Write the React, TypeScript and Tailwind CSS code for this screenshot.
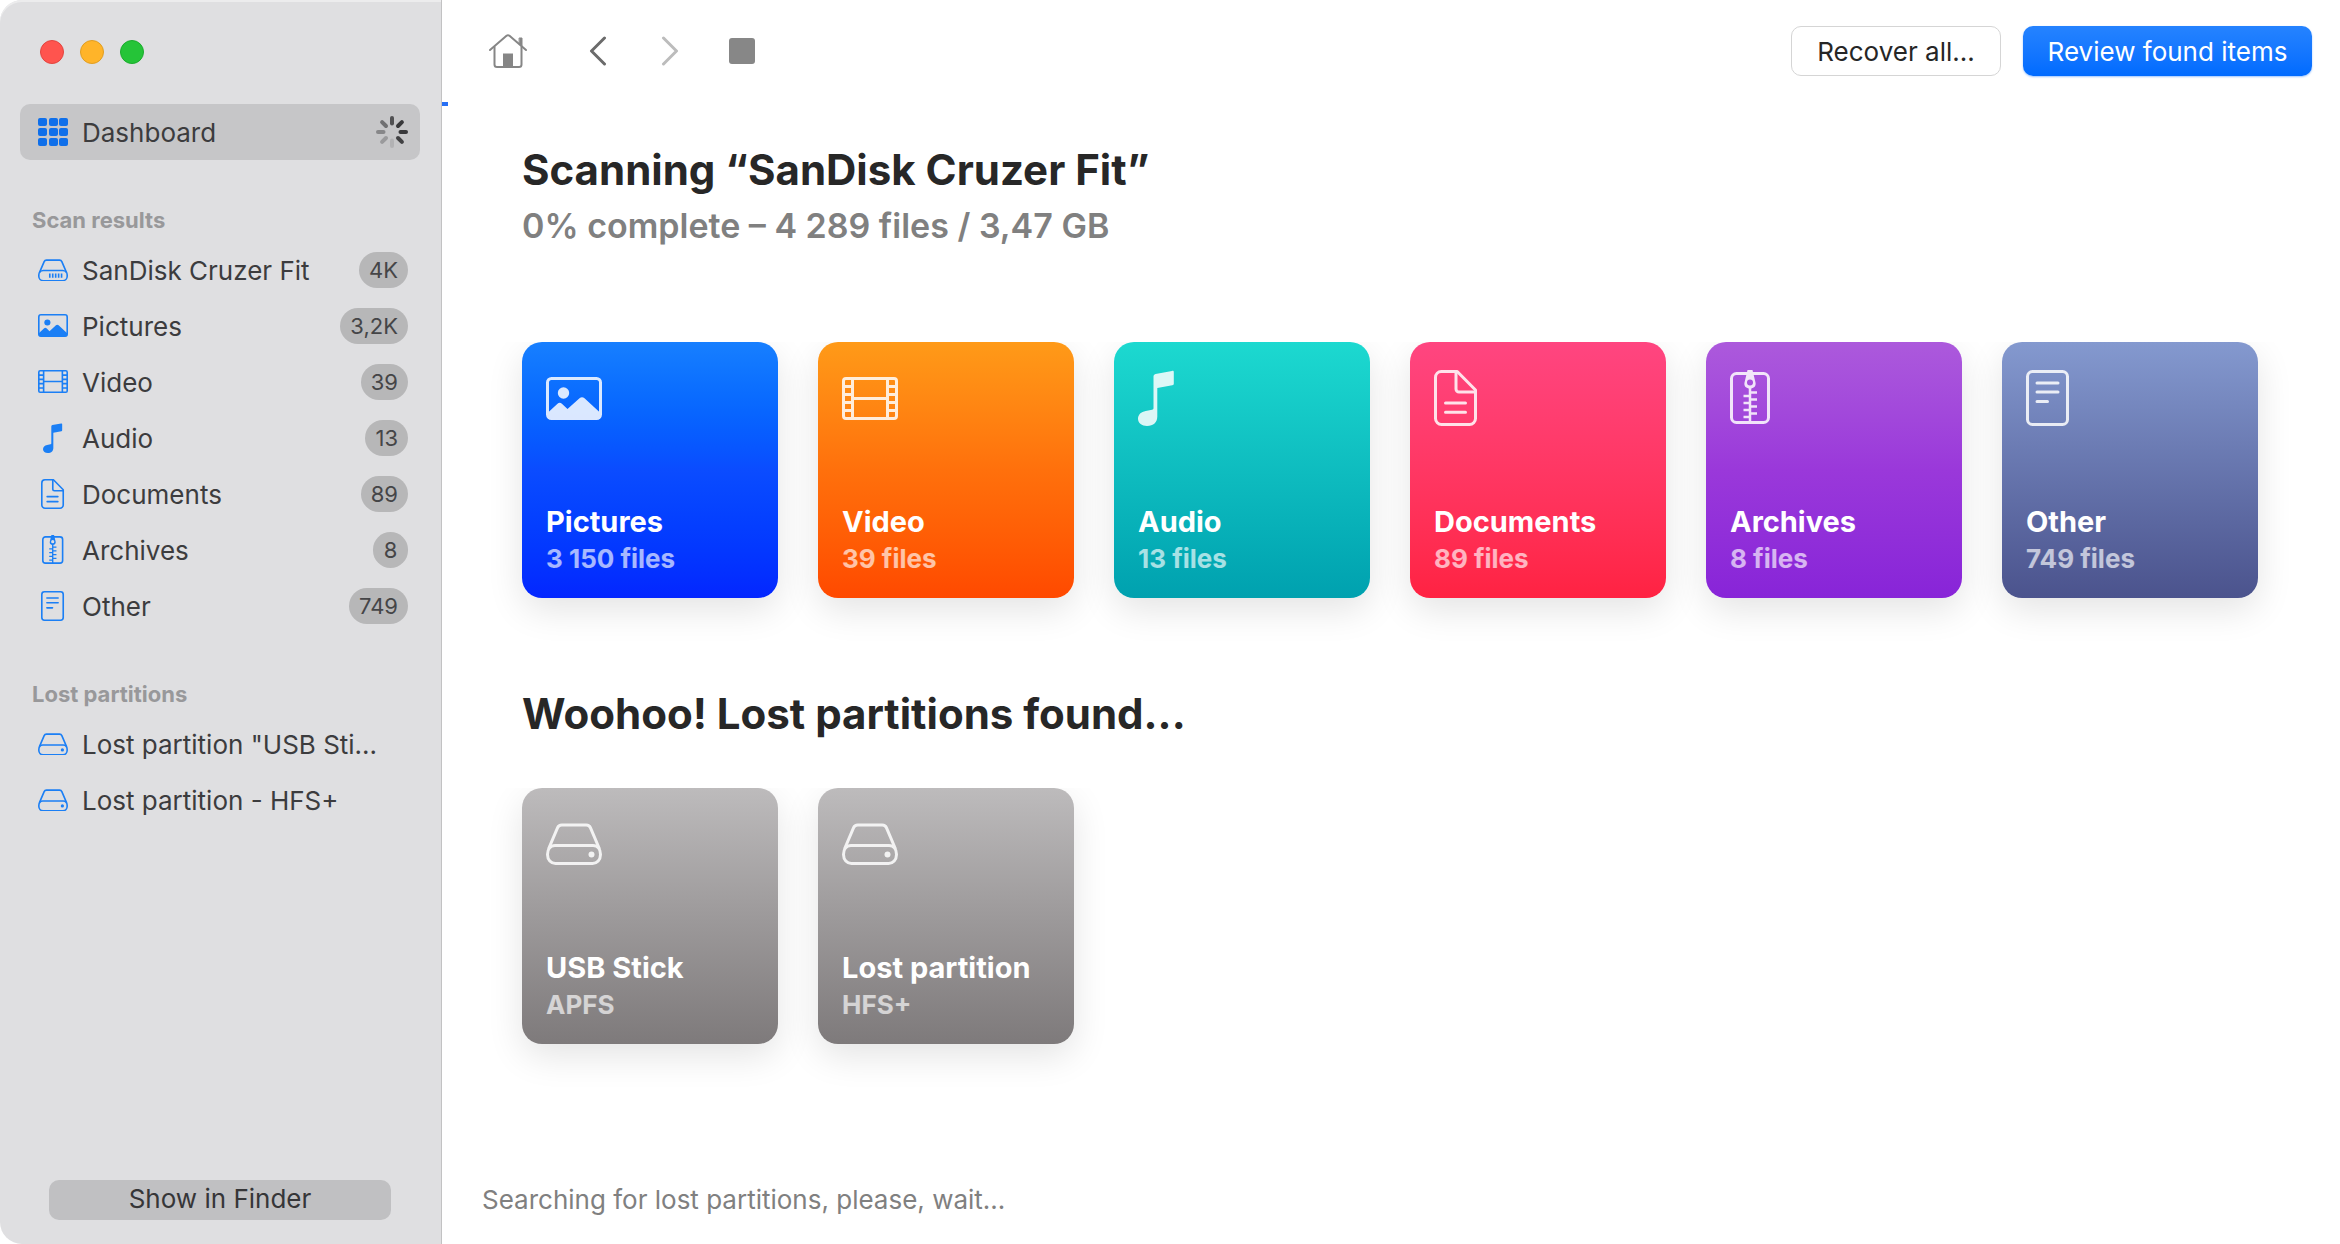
import { useState } from "react";
import type { ReactNode } from "react";

type IconName = "disk" | "drive" | "picture" | "video" | "audio" | "document" | "archive" | "other";

const SHAPES: Record<IconName, { w: number; h: number; art: ReactNode }> = {
  disk: {
    w: 56,
    h: 42,
    art: (
      <>
        <path d="M2.500 26 11.500 4.800C12.300 2.900 13.700 2 15.700 2h24.600c2 0 3.400.9 4.200 2.800L53.500 26" />
        <rect x="1.500" y="21.500" width="53" height="19" rx="8.500" />
        <path d="M22 27v8M27.500 27v8M33 27v8M38.500 27v8M44 27v8" />
      </>
    ),
  },
  drive: {
    w: 56,
    h: 42,
    art: (
      <>
        <path d="M2.500 26 11.500 4.800C12.300 2.900 13.700 2 15.700 2h24.600c2 0 3.400.9 4.200 2.800L53.500 26" />
        <path d="M9 22.500h38c4.500 0 7.500 3.700 7.500 9s-3.500 9-8 9h-37c-4.500 0-8-3.700-8-9s3-9 7.500-9Z" />
        <circle cx="45.500" cy="31.500" r="3" fill="currentColor" stroke="none" />
      </>
    ),
  },
  picture: {
    w: 56,
    h: 43,
    art: (
      <>
        <rect x="1.500" y="1.500" width="53" height="40" rx="4" />
        <circle cx="17.500" cy="16" r="5.700" fill="currentColor" stroke="none" />
        <path
          d="M1.500 36 11.500 26.800c1.400-1.300 3-1.300 4.400 0L21.500 32 33.500 21.200c1.600-1.400 3.400-1.400 5 0L54.500 36v3.700a2 2 0 0 1-2 2h-49a2 2 0 0 1-2-2Z"
          fill="currentColor"
          stroke="none"
        />
      </>
    ),
  },
  video: {
    w: 56,
    h: 43,
    art: (
      <>
        <rect x="1.500" y="1.500" width="53" height="40" rx="2.500" />
        <path d="M10.500 1.500v40M45.500 1.500v40M10.500 21.500h35" />
        <path d="M1.500 9.500h9M1.500 17.500h9M1.500 25.500h9M1.500 33.500h9M45.500 9.500h9M45.500 17.500h9M45.500 25.500h9M45.500 33.500h9" />
      </>
    ),
  },
  audio: {
    w: 36,
    h: 56,
    art: (
      <path
        d="M15.500 6.600c0-1.500.7-2.300 2-2.700L34 .9c1.200-.3 1.800.2 1.800 1.300v11.200c0 1-.5 1.600-1.500 1.800l-15 2.900V46.500c0 5.800-3.800 9.500-10.300 9.500C3.900 56 0 53.100 0 48.800c0-4.200 3.100-7 7.700-7.800l6.300-1.200c1-.2 1.500-.8 1.500-1.800Z"
        fill="currentColor"
        stroke="none"
      />
    ),
  },
  document: {
    w: 43,
    h: 56,
    art: (
      <>
        <path d="M7.300 1.500h15.900L41.500 20v28.500a6 6 0 0 1-6 6H7.500a6 6 0 0 1-6-6V7.500a6 6 0 0 1 5.800-6Z" />
        <path d="M22 1.500V19a3 3 0 0 0 3 3h16.500M11.500 33h20M11.500 42.300h20" strokeLinecap="round" />
      </>
    ),
  },
  archive: {
    w: 40,
    h: 56,
    art: (
      <>
        <rect x="1.500" y="3.500" width="37" height="49" rx="5" />
        <path
          d="M17.500 0h5l3 12.500c.8 3.700-1.700 6-5.500 6s-6.300-2.300-5.500-6Z M20 9.500a3 3 0 1 0 0 6 3 3 0 0 0 0-6Z"
          fill="currentColor"
          fillRule="evenodd"
          stroke="none"
        />
        <path
          d="M20 18v35M20 22.500h7M20 29.500h7M20 36.500h7M20 43.500h7M13.500 26h6.500M13.500 33h6.500M13.500 40h6.500M13.500 47h6.500"
          strokeWidth="2.500"
        />
      </>
    ),
  },
  other: {
    w: 43,
    h: 56,
    art: (
      <>
        <rect x="1.500" y="1.500" width="40" height="53" rx="5" />
        <path d="M11 13h21M11 22h21M11 31.500h10.500" strokeLinecap="round" />
      </>
    ),
  },
};

function Icon({ name, scale = 1 }: { name: IconName; scale?: number }) {
  const { w, h, art } = SHAPES[name];
  return (
    <svg
      width={w * scale}
      height={h * scale}
      viewBox={`0 0 ${w} ${h}`}
      fill="none"
      stroke="currentColor"
      strokeWidth={3}
      strokeLinejoin="round"
      aria-hidden="true"
    >
      {art}
    </svg>
  );
}

const SPOKES = [0.75, 0.9, 0.9, 0.85, 0.12, 0.28, 0.4, 0.55];

function Spinner() {
  return (
    <svg width="32" height="32" viewBox="-16 -16 32 32" aria-label="Scanning" role="img">
      {SPOKES.map((opacity, i) => (
        <path
          key={i}
          d="M0-8.500V-14"
          stroke="#2a2a2c"
          strokeWidth="4"
          strokeLinecap="round"
          opacity={opacity}
          transform={`rotate(${i * 45})`}
        />
      ))}
    </svg>
  );
}

function GridIcon() {
  return (
    <svg width="30" height="28" viewBox="0 0 30 28" fill="#0f6fea" aria-hidden="true">
      {[0, 10, 20].map((y) =>
        [0, 11, 21].map((x) => <rect key={`${x}-${y}`} x={x} y={y} width="9" height="8" rx="2" />),
      )}
    </svg>
  );
}

type Item = { icon: IconName; label: string; count?: string };

const RESULTS: Item[] = [
  { icon: "disk", label: "SanDisk Cruzer Fit", count: "4K" },
  { icon: "picture", label: "Pictures", count: "3,2K" },
  { icon: "video", label: "Video", count: "39" },
  { icon: "audio", label: "Audio", count: "13" },
  { icon: "document", label: "Documents", count: "89" },
  { icon: "archive", label: "Archives", count: "8" },
  { icon: "other", label: "Other", count: "749" },
];

const LOST: Item[] = [
  { icon: "drive", label: 'Lost partition "USB Sti...' },
  { icon: "drive", label: "Lost partition - HFS+" },
];

type Tile = { icon: IconName; title: string; detail: string; color: string };

const TILES: Tile[] = [
  { icon: "picture", title: "Pictures", detail: "3 150 files", color: "from-[#177fff] via-[#0b4cff] to-[#0426ff]" },
  { icon: "video", title: "Video", detail: "39 files", color: "from-[#ff9a18] via-[#ff700c] to-[#ff4900]" },
  { icon: "audio", title: "Audio", detail: "13 files", color: "from-[#1cd9d0] to-[#00a1af]" },
  { icon: "document", title: "Documents", detail: "89 files", color: "from-[#ff4580] to-[#ff2242]" },
  { icon: "archive", title: "Archives", detail: "8 files", color: "from-[#ac59dc] via-[#9a38da] to-[#8824d8]" },
  { icon: "other", title: "Other", detail: "749 files", color: "from-[#8499cf] to-[#4b538d]" },
];

const PARTITIONS: Tile[] = [
  { icon: "drive", title: "USB Stick", detail: "APFS", color: "from-[#bdbbbc] to-[#7e7a7b]" },
  { icon: "drive", title: "Lost partition", detail: "HFS+", color: "from-[#bdbbbc] to-[#7e7a7b]" },
];

function SideLabel({ children }: { children: ReactNode }) {
  return <span className="ml-[14px] grow pt-0.5 text-[26px] leading-9 whitespace-nowrap text-[#3c3c3e]">{children}</span>;
}

function SideItem({ icon, label, count }: Item) {
  return (
    <li>
      <button type="button" className="flex h-14 w-full items-center pr-3 pl-[18px] text-left">
        <span className="flex w-[30px] shrink-0 justify-center text-[#1b7ff5]">
          <Icon name={icon} scale={30 / 56} />
        </span>
        <SideLabel>{label}</SideLabel>
        {count && (
          <span className="flex h-9 min-w-[35px] items-center justify-center rounded-full bg-[#b7b7b8] px-[10px] text-[22px] text-[#454547]">
            {count}
          </span>
        )}
      </button>
    </li>
  );
}

function SideSection({ title, items }: { title: string; items: Item[] }) {
  return (
    <section className="mt-[38px]">
      <h2 className="pl-3 text-[22px] leading-[44px] font-bold text-[#98989a]">{title}</h2>
      <ul>
        {items.map((item) => (
          <SideItem key={item.label} {...item} />
        ))}
      </ul>
    </section>
  );
}

function TileRow({ tiles }: { tiles: Tile[] }) {
  return (
    <div className="flex flex-wrap gap-10 [clip-path:inset(0_-40px_-60px_-40px)]">
      {tiles.map((tile) => (
        <button
          key={tile.title}
          type="button"
          className={`flex size-64 flex-col items-start justify-between rounded-[20px] bg-linear-to-b px-6 pt-7 pb-[21px] text-left text-white shadow-[0_12px_36px_rgba(0,0,0,0.11)] ${tile.color}`}
        >
          <span className="flex h-14 items-center opacity-85">
            <Icon name={tile.icon} />
          </span>
          <span className="flex flex-col font-bold">
            <span className="text-[29px] leading-[38px]">{tile.title}</span>
            <span className="text-[26px] leading-9 text-white/65">{tile.detail}</span>
          </span>
        </button>
      ))}
    </div>
  );
}

function ToolButton({ label, disabled, className = "", children }: { label: string; disabled?: boolean; className?: string; children: ReactNode }) {
  return (
    <button type="button" aria-label={label} disabled={disabled} className={`flex size-12 items-center justify-center ${className}`}>
      {children}
    </button>
  );
}

export default function App() {
  const [progress] = useState(0.3);

  return (
    <div className="flex min-h-screen bg-white font-['Inter',sans-serif]">
      <aside className="flex w-[442px] shrink-0 flex-col rounded-l-[22px] border-r border-[#c2c2c3] bg-[#dfdfe1] pt-10 pr-[21px] pl-5 shadow-[inset_0_2px_0_#ececed]">
        <div className="flex gap-4 pl-5">
          <button type="button" aria-label="Close" className="size-6 rounded-full border border-[#e2453f] bg-[#ff544e]" />
          <button type="button" aria-label="Minimize" className="size-6 rounded-full border border-[#e09e22] bg-[#ffb429]" />
          <button type="button" aria-label="Zoom" className="size-6 rounded-full border border-[#1bac2d] bg-[#25c438]" />
        </div>

        <nav className="mt-10">
          <button
            type="button"
            aria-current="page"
            className="flex h-14 w-full items-center rounded-[10px] bg-[#c6c6c8] pr-3 pl-[18px] text-left"
          >
            <GridIcon />
            <SideLabel>Dashboard</SideLabel>
            <Spinner />
          </button>
          <SideSection title="Scan results" items={RESULTS} />
          <SideSection title="Lost partitions" items={LOST} />
        </nav>

        <button
          type="button"
          className="mx-[29px] mt-auto mb-6 h-10 rounded-[10px] bg-[#c0c0c2] text-[26px] leading-[38px] text-[#363638]"
        >
          <span className="block pb-0.5">Show in Finder</span>
        </button>
      </aside>

      <main className="flex min-w-0 grow flex-col">
        <header className="flex h-[102px] items-center gap-6 pr-7 pl-[42px]">
          <ToolButton label="Home" className="mr-[18px]">
            <svg width="38" height="34" viewBox="0 0 38 34" fill="none" stroke="#868686" strokeWidth="2" strokeLinecap="round" strokeLinejoin="round" aria-hidden="true">
              <path d="M1 16 17.500 1.800c1-.8 2-.8 3 0L37 16" />
              <path d="M5.500 13v17.500a2.500 2.500 0 0 0 2.500 2.500h22a2.500 2.500 0 0 0 2.500-2.500V13" />
              <path d="M30.500 4h2.500v8.500l-2.500-2Z" fill="#868686" strokeWidth="1" />
              <path d="M14 19.500h10V33H14Z" fill="#868686" stroke="none" />
            </svg>
          </ToolButton>
          <ToolButton label="Back">
            <svg width="18" height="30" viewBox="0 0 18 30" fill="none" stroke="#6b6b6b" strokeWidth="3" strokeLinecap="round" strokeLinejoin="round" aria-hidden="true">
              <path d="M15.500 2 2.500 15l13 13" />
            </svg>
          </ToolButton>
          <ToolButton label="Forward" disabled>
            <svg width="18" height="30" viewBox="0 0 18 30" fill="none" stroke="#bcbcbc" strokeWidth="3" strokeLinecap="round" strokeLinejoin="round" aria-hidden="true">
              <path d="m2.500 2 13 13-13 13" />
            </svg>
          </ToolButton>
          <ToolButton label="Stop">
            <span className="size-[26px] rounded-[3px] bg-[#878787]" />
          </ToolButton>
          <div className="ml-auto flex items-center gap-[22px]">
            <button type="button" className="h-[50px] w-[210px] rounded-[10px] border border-[#d5d5d5] bg-white text-[26px] whitespace-nowrap text-[#262626]">
              Recover all...
            </button>
            <button type="button" className="h-[50px] w-[289px] rounded-[10px] bg-linear-to-b from-[#2583ff] to-[#006bff] text-[26px] whitespace-nowrap text-white shadow-[0_1px_2px_rgba(0,107,255,0.4)]">
              Review found items
            </button>
          </div>
        </header>
        <div role="progressbar" aria-label="Scan progress" aria-valuenow={0} className="h-1">
          <div className="h-1 bg-[#266ff5]" style={{ width: `${progress}%` }} />
        </div>

        <div className="pt-9 pr-10 pl-20">
          <h1 className="text-[42px] leading-[56px] font-bold text-[#272727]">Scanning “SanDisk Cruzer Fit”</h1>
          <p className="text-[34px] leading-[56px] font-semibold text-[#808080]">0% complete – 4 289 files / 3,47 GB</p>
          <div className="mt-[88px]">
            <TileRow tiles={TILES} />
          </div>
          <h2 className="mt-[88px] mb-[46px] text-[42px] leading-[56px] font-bold text-[#272727]">Woohoo! Lost partitions found...</h2>
          <TileRow tiles={PARTITIONS} />
        </div>

        <p className="mt-auto pb-6 pl-10 text-[26px] leading-10 text-[#808080]">Searching for lost partitions, please, wait...</p>
      </main>
    </div>
  );
}
